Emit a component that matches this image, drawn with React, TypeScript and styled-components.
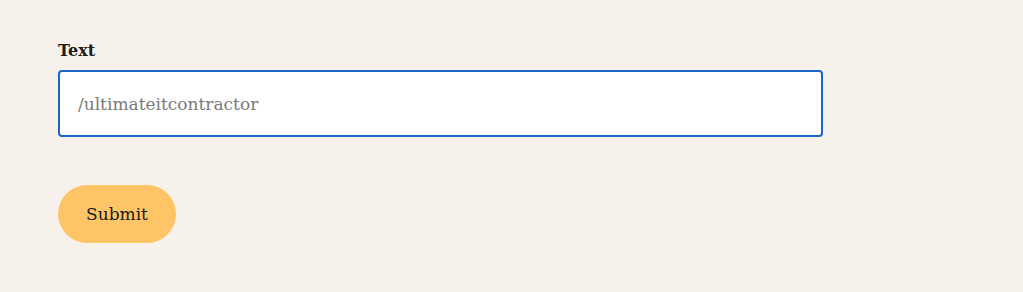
import React, { useState } from "react";
import styled, { createGlobalStyle } from "styled-components";

const GlobalStyle = createGlobalStyle`
  html, body {
    margin: 0;
    padding: 0;
    background: #f6f2eb;
  }
  body {
    font-family: "DejaVu Serif", "Liberation Serif", serif;
  }
`;

const Page = styled.div`
  min-height: 292px;
  padding: 40px 58px 0;
  box-sizing: border-box;
  background: #f6f2eb;
`;

const Form = styled.form`
  display: flex;
  flex-direction: column;
  align-items: flex-start;
  width: 765px;
`;

const Label = styled.label`
  font-size: 16px;
  font-weight: bold;
  color: #1c1c1a;
  line-height: 22px;
  margin-bottom: 8px;
`;

const Input = styled.input`
  width: 100%;
  height: 67px;
  box-sizing: border-box;
  border: 2px solid #1b66c9;
  border-radius: 4px;
  background: #ffffff;
  padding: 0 18px;
  font-family: inherit;
  font-size: 17px;
  color: #1c1c1a;
  outline: none;

  &::placeholder {
    color: #7a7a7a;
  }
`;

const Button = styled.button`
  margin-top: 48px;
  width: 118px;
  height: 58px;
  border: none;
  border-radius: 29px;
  background: #ffc466;
  color: #1c1c1a;
  font-family: inherit;
  font-size: 17px;
  cursor: pointer;
`;

const App = () => {
  const [value, setValue] = useState("");

  return (
    <>
      <GlobalStyle />
      <Page>
        <Form onSubmit={(e) => e.preventDefault()}>
          <Label htmlFor="text">Text</Label>
          <Input
            id="text"
            placeholder="/ultimateitcontractor"
            value={value}
            onChange={(e) => setValue(e.target.value)}
          />
          <Button type="submit">Submit</Button>
        </Form>
      </Page>
    </>
  );
};

export default App;
